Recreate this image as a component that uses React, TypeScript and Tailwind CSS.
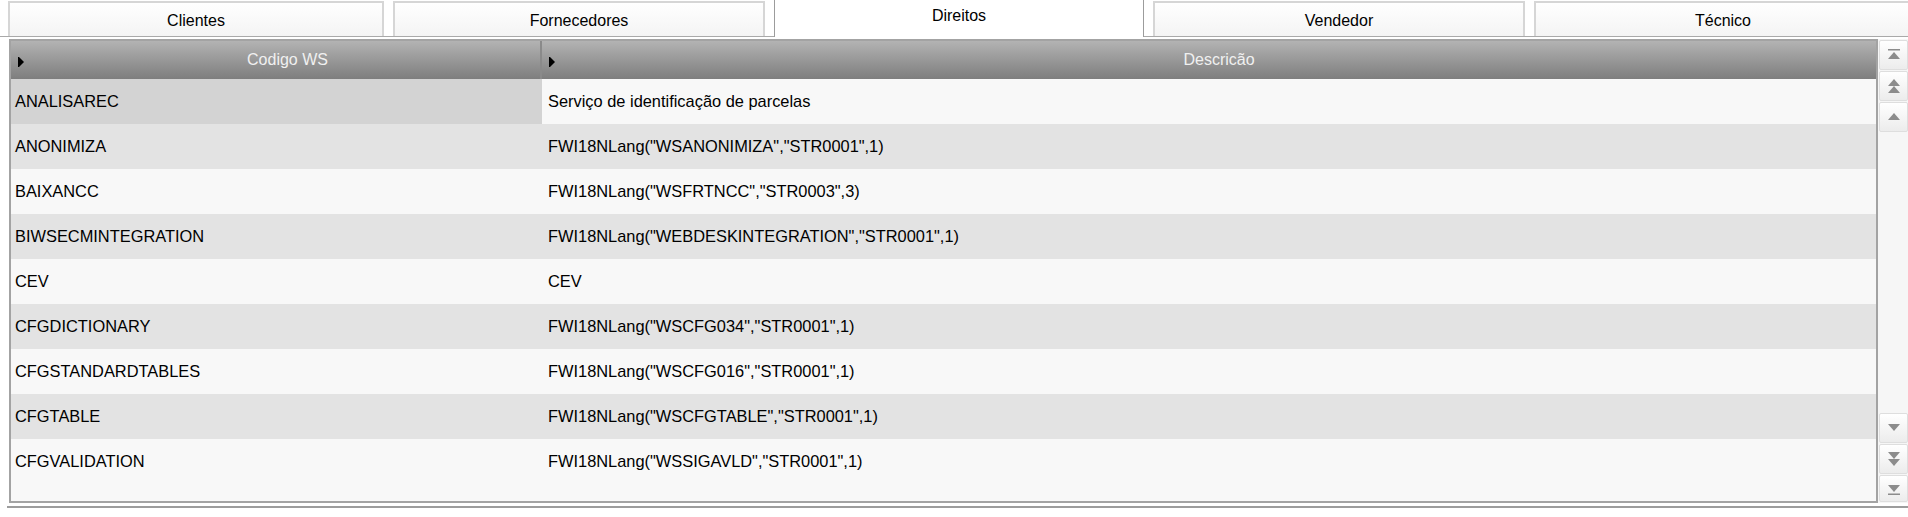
import React from "react";

const rows: [string, string][] = [
  ["ANALISAREC", "Serviço de identificação de parcelas"],
  ["ANONIMIZA", 'FWI18NLang("WSANONIMIZA","STR0001",1)'],
  ["BAIXANCC", 'FWI18NLang("WSFRTNCC","STR0003",3)'],
  ["BIWSECMINTEGRATION", 'FWI18NLang("WEBDESKINTEGRATION","STR0001",1)'],
  ["CEV", "CEV"],
  ["CFGDICTIONARY", 'FWI18NLang("WSCFG034","STR0001",1)'],
  ["CFGSTANDARDTABLES", 'FWI18NLang("WSCFG016","STR0001",1)'],
  ["CFGTABLE", 'FWI18NLang("WSCFGTABLE","STR0001",1)'],
  ["CFGVALIDATION", 'FWI18NLang("WSSIGAVLD","STR0001",1)'],
];

function Tab({ label, w, active }: { label: string; w: string; active?: boolean }) {
  if (active) {
    return (
      <div
        className={`${w} h-[38px] -mb-px shrink-0 bg-white border-x border-t border-[#9c9c9c] flex items-center justify-center pb-[6px]`}
      >
        {label}
      </div>
    );
  }
  return (
    <div
      className={`${w} h-[35px] shrink-0 border-2 border-b-0 border-[#d6d6d6] bg-gradient-to-b from-white to-[#f4f4f4] flex items-center justify-center pt-[3px]`}
    >
      {label}
    </div>
  );
}

function SortArrow() {
  return (
    <svg width="7" height="10" viewBox="0 0 7 10" className="absolute left-[7px] top-[16px]">
      <path d="M0 0 L0 10 L1 10 L6 5 L1 0 Z" fill="#000" />
    </svg>
  );
}

function Tri({ up, y }: { up: boolean; y: number }) {
  return up ? (
    <path d={`M6 ${y} L12 ${y + 7} L0 ${y + 7} Z`} fill="#8c8c8c" />
  ) : (
    <path d={`M0 ${y} L12 ${y} L6 ${y + 7} Z`} fill="#8c8c8c" />
  );
}

function ScrollBtn({ kind, h }: { kind: string; h: string }) {
  let icon: React.ReactNode = null;
  if (kind === "top")
    icon = (
      <svg width="12" height="12" viewBox="0 0 12 12">
        <rect x="0" y="0" width="12" height="1.5" fill="#8c8c8c" />
        <Tri up y={3} />
      </svg>
    );
  if (kind === "pgup")
    icon = (
      <svg width="12" height="14" viewBox="0 0 12 14">
        <Tri up y={0} />
        <Tri up y={7} />
      </svg>
    );
  if (kind === "up")
    icon = (
      <svg width="12" height="8" viewBox="0 0 12 8">
        <Tri up y={0} />
      </svg>
    );
  if (kind === "down")
    icon = (
      <svg width="12" height="8" viewBox="0 0 12 8">
        <Tri up={false} y={0} />
      </svg>
    );
  if (kind === "pgdn")
    icon = (
      <svg width="12" height="14" viewBox="0 0 12 14">
        <Tri up={false} y={0} />
        <Tri up={false} y={7} />
      </svg>
    );
  if (kind === "bottom")
    icon = (
      <svg width="12" height="12" viewBox="0 0 12 12">
        <Tri up={false} y={2} />
        <rect x="0" y="10.5" width="12" height="1.5" fill="#8c8c8c" />
      </svg>
    );
  return (
    <div
      className={`${h} w-[29px] border border-[#dedede] rounded-[2px] bg-gradient-to-b from-white to-[#ececec] flex items-center justify-center`}
    >
      {icon}
    </div>
  );
}

export default function App() {
  return (
    <div className="w-[1908px] h-[517px] bg-white overflow-hidden font-['Liberation_Sans',Arial,sans-serif] text-[16px] text-black">
      <div className="h-[37px] border-b border-[#a9a9a9] flex items-end pl-[8px] gap-[9px]">
        <Tab label="Clientes" w="w-[376px]" />
        <Tab label="Fornecedores" w="w-[372px]" />
        <Tab label="Direitos" w="w-[370px]" active />
        <Tab label="Vendedor" w="w-[372px]" />
        <Tab label="Técnico" w="w-[378px]" />
      </div>
      <div className="flex mt-[2px] ml-[9px]">
        <div className="w-[1869px] h-[464px] border-2 border-[#a3a3a3] bg-[#f8f8f8] flex flex-col">
          <div className="h-[38px] flex bg-gradient-to-b from-[#b3b3b3] to-[#7e7e7e] text-[#f0f0f0]">
            <div className="relative w-[531px] border-r-2 border-[#8a8a8a] flex items-center justify-center pl-[24px]">
              <SortArrow />
              <span>Codigo WS</span>
            </div>
            <div className="relative flex-1 flex items-center justify-center pl-[20px]">
              <SortArrow />
              <span>Descricão</span>
            </div>
          </div>
          {rows.map(([code, desc], i) => (
            <div
              key={code}
              className={`h-[45px] flex items-center text-[16.4px] ${i % 2 === 1 ? "bg-[#e3e3e3]" : "bg-[#f8f8f8]"}`}
            >
              <div
                className={`w-[531px] h-full flex items-center pl-[4px] ${i === 0 ? "bg-[#d3d3d3]" : ""}`}
              >
                {code}
              </div>
              <div className="flex-1 h-full flex items-center pl-[6px]">{desc}</div>
            </div>
          ))}
        </div>
        <div className="w-[30px] h-[464px] bg-[#f6f6f6] flex flex-col justify-between pl-[1px] pt-[1px] pb-[1px]">
          <div className="flex flex-col gap-[1px]">
            <ScrollBtn kind="top" h="h-[30px]" />
            <ScrollBtn kind="pgup" h="h-[30px]" />
            <ScrollBtn kind="up" h="h-[30px]" />
          </div>
          <div className="flex flex-col gap-[1px]">
            <ScrollBtn kind="down" h="h-[30px]" />
            <ScrollBtn kind="pgdn" h="h-[30px]" />
            <ScrollBtn kind="bottom" h="h-[27px]" />
          </div>
        </div>
      </div>
      <div className="mt-[3px] ml-[7px] h-[2px] bg-[#9c9c9c]" />
    </div>
  );
}
